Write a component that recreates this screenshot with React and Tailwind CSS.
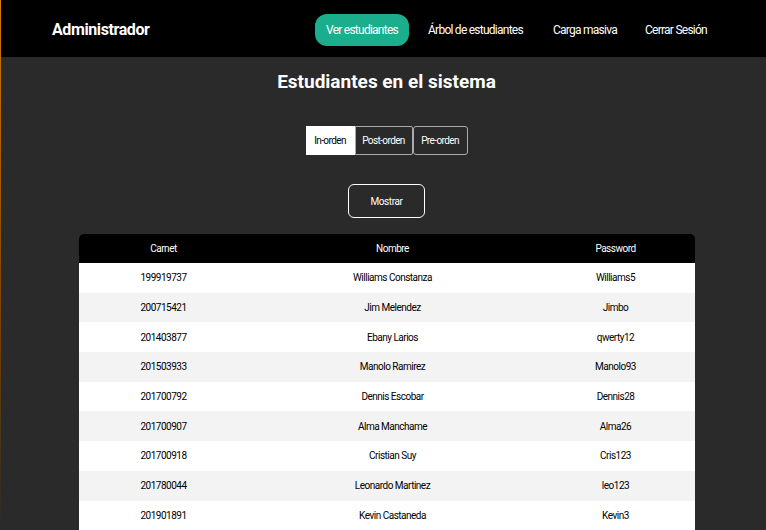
import React from "react";

const rows = [
  ["199919737", "Williams Constanza", "Williams5"],
  ["200715421", "Jim Melendez", "Jimbo"],
  ["201403877", "Ebany Larios", "qwerty12"],
  ["201503933", "Manolo Ramirez", "Manolo93"],
  ["201700792", "Dennis Escobar", "Dennis28"],
  ["201700907", "Alma Manchame", "Alma26"],
  ["201700918", "Cristian Suy", "Cris123"],
  ["201780044", "Leonardo Martinez", "leo123"],
  ["201901891", "Kevin Castaneda", "Kevin3"],
];

export default function App() {
  return (
    <div className="h-[530px] w-[766px] overflow-hidden bg-[linear-gradient(to_bottom,#d77a00,#7a4300_60%,#2a2a2a)] pl-px font-['Roboto','Liberation_Sans',sans-serif]">
      <div className="flex h-full flex-col bg-[#2a2a2a]">
        <nav className="flex h-[57px] shrink-0 items-center bg-black pt-[3px] pl-[51px] pr-[61px]">
          <div className="text-[16px] font-bold tracking-[-0.4px] text-white">Administrador</div>
          <div className="ml-auto flex items-center whitespace-nowrap text-[12px] tracking-[-0.75px] text-white">
            <div className="flex h-[32px] w-[94px] items-center justify-center rounded-[12px] bg-[#1aae8c]">Ver estudiantes</div>
            <div className="ml-[19px] w-[94px] text-center">Árbol de estudiantes</div>
            <div className="ml-[31px] w-[60px] text-center">Carga masiva</div>
            <div className="ml-[32px] w-[60px] text-center">Cerrar Sesión</div>
          </div>
        </nav>
        <main className="flex flex-col items-center pl-[6px]">
          <h1 className="mt-[13px] text-[19px] leading-[24px] font-bold tracking-[0px] text-white">Estudiantes en el sistema</h1>
          <div className="mt-[32px] flex h-[29px] text-[10px] tracking-[-0.6px]">
            <div className="flex w-[49px] items-center justify-center bg-white text-black">In-orden</div>
            <div className="flex w-[58px] items-center justify-center rounded-r-[2px] border border-[#aaaaaa] text-white">Post-orden</div>
            <div className="flex w-[55px] items-center justify-center rounded-[3px] border border-[#aaaaaa] text-white">Pre-orden</div>
          </div>
          <div className="mt-[29px] flex h-[34px] w-[77px] items-center justify-center rounded-[6px] border border-white text-[10px] tracking-[-0.4px] text-white">Mostrar</div>
          <div className="mt-[16px] w-[616px] overflow-hidden rounded-t-[5px] text-[10px] tracking-[-0.5px]">
            <div className="grid h-[29px] grid-cols-[170px_288px_158px] items-center bg-black text-white">
              <div className="text-center">Carnet</div>
              <div className="text-center">Nombre</div>
              <div className="text-center">Password</div>
            </div>
            {rows.map((r, i) => (
              <div
                key={r[0]}
                className={`grid h-[29.7px] grid-cols-[170px_288px_158px] items-center text-black ${i % 2 === 1 ? "bg-[#f3f3f3]" : "bg-white"}`}
              >
                <div className="text-center">{r[0]}</div>
                <div className="text-center">{r[1]}</div>
                <div className="text-center">{r[2]}</div>
              </div>
            ))}
          </div>
        </main>
      </div>
    </div>
  );
}
